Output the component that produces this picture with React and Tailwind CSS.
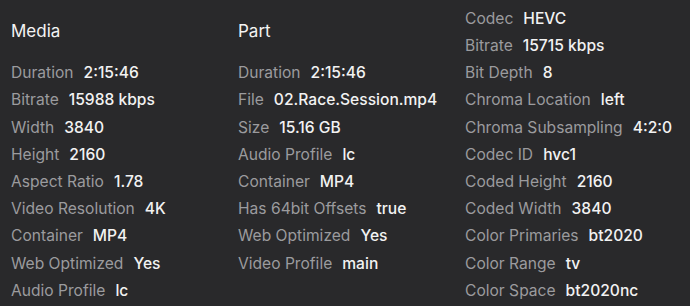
import React from "react";

const media = [
    ["Duration", "2:15:46"],
    ["Bitrate", "15988 kbps"],
    ["Width", "3840"],
    ["Height", "2160"],
    ["Aspect Ratio", "1.78"],
    ["Video Resolution", "4K"],
    ["Container", "MP4"],
    ["Web Optimized", "Yes"],
    ["Audio Profile", "lc"],
];

const part = [
    ["Duration", "2:15:46"],
    ["File", "02.Race.Session.mp4"],
    ["Size", "15.16 GB"],
    ["Audio Profile", "lc"],
    ["Container", "MP4"],
    ["Has 64bit Offsets", "true"],
    ["Web Optimized", "Yes"],
    ["Video Profile", "main"],
];

const stream = [
    ["Codec", "HEVC"],
    ["Bitrate", "15715 kbps"],
    ["Bit Depth", "8"],
    ["Chroma Location", "left"],
    ["Chroma Subsampling", "4:2:0"],
    ["Codec ID", "hvc1"],
    ["Coded Height", "2160"],
    ["Coded Width", "3840"],
    ["Color Primaries", "bt2020"],
    ["Color Range", "tv"],
    ["Color Space", "bt2020nc"],
];

function Row({ label, value }) {
    return (
        <div className="flex items-center h-[27.2px] whitespace-nowrap">
            <span className="text-[#9b9b9e]">{label}</span>
            <span className="ml-[10px] text-[#f2f2f2] font-medium">{value}</span>
        </div>
    );
}

function Column({ title, rows }) {
    return (
        <div className="w-[227px] pl-[11px]">
            {title && (
                <div className="h-[54.4px] flex items-center text-[17px] text-[#f4f4f4]">{title}</div>
            )}
            {rows.map(([l, v]) => (
                <Row key={l} label={l} value={v} />
            ))}
        </div>
    );
}

export default function App() {
    return (
        <div
            className="w-[690px] h-[306px] bg-[#29292b] flex pt-[5px] overflow-hidden text-[15.6px]"
            style={{ fontFamily: "Inter, 'Noto Sans', sans-serif" }}
        >
            <Column title="Media" rows={media} />
            <Column title="Part" rows={part} />
            <Column rows={stream} />
        </div>
    );
}
